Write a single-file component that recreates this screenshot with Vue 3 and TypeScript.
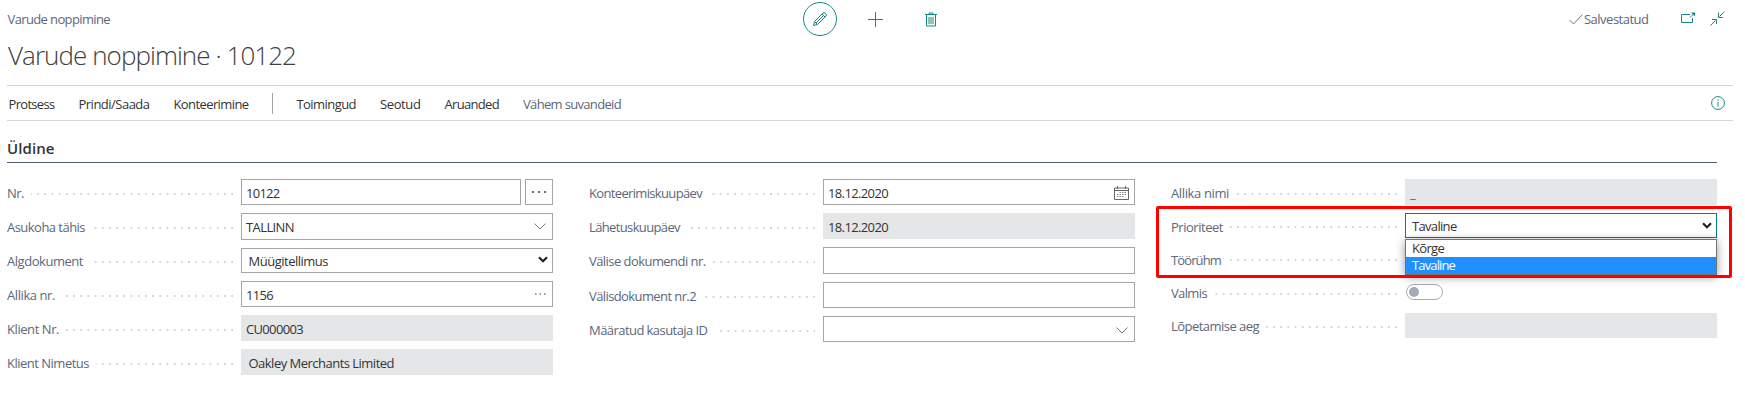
<script setup lang="ts">
interface Field {
  label: string
  labelWidth: number
  value?: string
  valueWidth?: number
  kind: 'text' | 'readonly' | 'lookup' | 'select' | 'assist' | 'edit' | 'date' | 'priority' | 'hidden' | 'toggle' | 'link'
  size?: 'short' | 'tall'
  inset?: boolean
}

interface MenuItem {
  text: string
  width: number
  muted?: boolean
}

const actions: MenuItem[] = [
  { text: 'Protsess', width: 46 },
  { text: 'Prindi/Saada', width: 71 },
  { text: 'Konteerimine', width: 75 },
]

const moreActions: MenuItem[] = [
  { text: 'Toimingud', width: 59.5 },
  { text: 'Seotud', width: 40.5 },
  { text: 'Aruanded', width: 54.5 },
  { text: 'Vähem suvandeid', width: 98, muted: true },
]

const columns: Field[][] = [
  [
    { label: 'Nr.', labelWidth: 17, value: '10122', valueWidth: 33.5, kind: 'edit' },
    { label: 'Asukoha tähis', labelWidth: 78, value: 'TALLINN', valueWidth: 48, kind: 'lookup', size: 'tall' },
    { label: 'Algdokument', labelWidth: 76, value: 'Müügitellimus', valueWidth: 79.5, kind: 'select', size: 'short', inset: true },
    { label: 'Allika nr.', labelWidth: 48, value: '1156', valueWidth: 27, kind: 'assist' },
    { label: 'Klient Nr.', labelWidth: 52, value: 'CU000003', valueWidth: 57, kind: 'readonly' },
    { label: 'Klient Nimetus', labelWidth: 82, value: 'Oakley Merchants Limited', valueWidth: 145.5, kind: 'readonly', inset: true },
  ],
  [
    { label: 'Konteerimiskuupäev', labelWidth: 113, value: '18.12.2020', valueWidth: 60, kind: 'date' },
    { label: 'Lähetuskuupäev', labelWidth: 91, value: '18.12.2020', valueWidth: 60, kind: 'readonly' },
    { label: 'Välise dokumendi nr.', labelWidth: 116.5, kind: 'text', size: 'tall' },
    { label: 'Välisdokument nr.2', labelWidth: 107, kind: 'text' },
    { label: 'Määratud kasutaja ID', labelWidth: 118.5, kind: 'lookup' },
  ],
  [
    { label: 'Allika nimi', labelWidth: 58, value: '_', valueWidth: 7, kind: 'link' },
    { label: 'Prioriteet', labelWidth: 52, value: 'Tavaline', valueWidth: 44.5, kind: 'priority', size: 'short', inset: true },
    { label: 'Töörühm', labelWidth: 50, kind: 'hidden', size: 'short' },
    { label: 'Valmis', labelWidth: 36, kind: 'toggle' },
    { label: 'Lõpetamise aeg', labelWidth: 88, kind: 'readonly', size: 'short' },
  ],
]

const vFit = {
  mounted(el: HTMLElement, binding: { value?: number }) {
    if (!binding.value) return
    const count = (el.textContent ?? '').length
    const natural = el.getBoundingClientRect().width
    if (count) el.style.letterSpacing = `${(binding.value - natural) / count}px`
  },
}
</script>

<template>
  <main class="page">
    <header class="top">
      <span class="crumb"><span v-fit="102.5">Varude noppimine</span></span>
      <div class="tools">
        <span class="ring">
          <svg width="16" height="16" viewBox="0 0 16 16">
            <path d="M1.5 14.5l1-4L11 2q1-.9 2-.1l1.1 1.2q.8 1-.1 1.9l-8.5 8.5zM2.5 10.5l3 3M10 3l3 3M4 12L11 5" />
          </svg>
        </span>
        <svg class="plus" width="15" height="15" viewBox="0 0 15 15"><path d="M7.5 0v15M0 7.5h15" /></svg>
        <svg width="12" height="15" viewBox="0 0 12 15">
          <path d="M0 2.5h12M4 2.5v-1.5h4v1.5M1.5 3v11h9V3M4 5v7M6 5v7M8 5v7" />
        </svg>
      </div>
      <div class="status">
        <svg class="check" width="14" height="11" viewBox="0 0 14 11"><path d="M.5 6l4 4L13.5.5" /></svg>
        <span class="saved"><span v-fit="64.5">Salvestatud</span></span>
        <svg class="popout" width="15" height="12" viewBox="0 0 15 12">
          <path d="M9 2.5H.5v8h11V6M9 5.500L12.500 2" />
          <path class="solid" d="M10 .5h4v4z" />
        </svg>
        <svg class="shrink" width="15" height="15" viewBox="0 0 15 15">
          <path d="M14.500 .5L9.500 5.500M8.500 1.500v5H13M.5 14.500L5.500 9.500M2 8.500h4.500V13" />
        </svg>
      </div>
    </header>

    <h1><span v-fit="288">Varude noppimine · 10122</span></h1>

    <nav class="menu">
      <span v-for="item in actions" :key="item.text" v-fit="item.width">{{ item.text }}</span>
      <i class="divider"></i>
      <span v-for="item in moreActions" :key="item.text" v-fit="item.width" :class="{ muted: item.muted }">{{ item.text }}</span>
      <svg class="info" width="14" height="14" viewBox="0 0 14 14">
        <circle cx="7" cy="7" r="6.4" /><path d="M7 6v4.5M7 3.3v1.4" />
      </svg>
    </nav>

    <h2><span v-fit="47.5">Üldine</span></h2>

    <section class="columns">
      <div v-for="(column, index) in columns" :key="index" class="column">
        <div v-for="field in column" :key="field.label" class="row" :class="[field.size, field.kind + '-row']">
          <label><span v-fit="field.labelWidth">{{ field.label }}</span></label>
          <span class="dots"></span>
          <div class="control" :class="[field.kind, { inset: field.inset }]">
            <div v-if="field.kind !== 'hidden' && field.kind !== 'toggle'" class="box">
              <span v-if="field.value" v-fit="field.valueWidth" class="value">{{ field.value }}</span>
              <svg v-if="field.kind === 'lookup'" class="end chevron" width="12" height="7" viewBox="0 0 12 7"><path d="M.5 .5L6 6 11.5.5" /></svg>
              <svg v-if="field.kind === 'select' || field.kind === 'priority'" class="end arrow" width="10" height="7" viewBox="0 0 10 7"><path d="M1 1.2l4 4 4-4" /></svg>
              <svg v-if="field.kind === 'assist'" class="end ellipsis" width="12" height="2" viewBox="0 0 12 2"><path d="M1 1h1.5M5.5 1H7M10 1h1.5" /></svg>
              <svg v-if="field.kind === 'date'" class="end calendar" width="15" height="14" viewBox="0 0 15 14">
                <path d="M.5 2v11.5h14V2zM.5 4.5h14M3.5 0v3M11.5 0v3" />
                <path class="days" d="M5.5 6.5h7M3 8.5h9.5M3 10.5h7" />
              </svg>
            </div>
            <span v-if="field.kind === 'edit'" class="button">
              <svg width="14" height="2" viewBox="0 0 14 2"><path d="M0 1h2M6 1h2M12 1h2" /></svg>
            </span>
            <ul v-if="field.kind === 'priority'" class="options">
              <li><span v-fit="32">Kõrge</span></li>
              <li class="active"><span v-fit="43">Tavaline</span></li>
            </ul>
            <span v-if="field.kind === 'toggle'" class="switch"><i></i></span>
          </div>
        </div>
      </div>
    </section>
    <div class="highlight"></div>
  </main>
</template>

<style>
body {
  margin: 0;
  background: #fff;
}
</style>

<style scoped>
* {
  box-sizing: border-box;
}

.page {
  position: relative;
  width: 1745px;
  height: 405px;
  overflow: hidden;
  padding-left: 7px;
  background: #fff;
  color: #333;
  font: 13px/18px "Open Sans", "Noto Sans", sans-serif;
  white-space: nowrap;
}

svg {
  display: block;
  flex: none;
  fill: none;
  stroke: #16888c;
  stroke-width: 1;
}

.top {
  display: grid;
  grid-template-columns: 796px 1fr auto;
  align-items: center;
  height: 38px;
  padding-right: 20px;
  color: #5c677b;
}

.crumb {
  padding-left: 0.5px;
}

.tools {
  display: flex;
  align-items: center;
}

.ring {
  display: grid;
  place-items: center;
  width: 34px;
  height: 34px;
  border: 1px solid #16888c;
  border-radius: 50%;
}

.plus {
  margin: 0 42px 0 31px;
}

.status {
  display: flex;
  align-items: center;
}

.check {
  stroke: #6f7785;
}

.saved {
  width: 98px;
  padding-left: 1px;
}

.popout {
  margin: 0 14px 3px 0;
}

.solid {
  fill: #16888c;
  stroke: none;
}

.shrink {
  margin-bottom: 2px;
}

h1 {
  height: 47px;
  margin: 0;
  padding-left: 1px;
  color: #404040;
  font-size: 26px;
  font-weight: 300;
  line-height: 35px;
}

.menu {
  display: flex;
  align-items: center;
  gap: 24px;
  width: 1726px;
  height: 36px;
  padding: 0 8px 0 1.5px;
  border-top: 1px solid #d3d5d8;
  border-bottom: 1px solid #d3d5d8;
}

.menu > span {
  padding-top: 2px;
}

.divider {
  width: 1px;
  height: 21px;
  margin: 0 -1px 0 0;
  transform: translateX(-1px);
  background: #a0a6b0;
}

.muted {
  color: #5c677b;
}

.info {
  margin-left: auto;
}

h2 {
  width: 1710px;
  height: 42px;
  margin: 0;
  padding-top: 17px;
  border-bottom: 1px solid #4f5e70;
  font-size: 15px;
  font-weight: 600;
  line-height: 20px;
}

.columns {
  display: grid;
  grid-template-columns: repeat(3, 546px);
  gap: 36px;
  padding-top: 16px;
}

.column {
  display: flex;
  flex-direction: column;
  gap: 8px;
}

.row {
  display: flex;
  align-items: center;
  height: 26px;
}

.row.short {
  height: 25px;
}

.row.tall {
  height: 27px;
}

label {
  padding-top: 2px;
  color: #5c677b;
}

.short label,
.tall label {
  padding-top: 0;
}

.priority-row label,
.hidden-row label {
  padding-top: 2px;
}

.dots {
  flex: 1;
  height: 2px;
  margin: 3px 8px 0 7px;
  background: linear-gradient(90deg, transparent 5.2px, #d2d5d9 5.2px) right top / 7.2px 2px repeat-x;
}

.control {
  position: relative;
  display: flex;
  gap: 4px;
  width: 312px;
  height: 100%;
}

.box {
  display: flex;
  flex: 1;
  align-items: center;
  padding: 2px 5px 0 4px;
  border: 1px solid #a6a6a6;
}

.tall .box,
.select .box {
  padding-top: 0;
}

.inset .box {
  padding-left: 6.5px;
}

.readonly .box,
.link .box {
  border-color: #e5e6e8;
  background: #e5e6e8;
}

.link .value {
  color: #00848a;
}

.priority .box {
  padding-top: 1px;
  padding-left: 6px;
  border-color: #008089;
}

.end {
  margin-left: auto;
  stroke: #777;
}

.chevron {
  margin-right: 1px;
}

.arrow {
  margin-right: -1px;
  margin-bottom: 2px;
  stroke: #222;
  stroke-width: 2.2;
}

.ellipsis {
  margin-right: 1px;
  margin-bottom: 3px;
  stroke-width: 1.5;
}

.calendar {
  margin-bottom: 1px;
  stroke: #666;
}

.days {
  stroke: #888;
  stroke-dasharray: 1.5 1;
}

.button {
  display: grid;
  place-items: center;
  width: 28px;
  border: 1px solid #a6a6a6;
}

.button svg {
  stroke: #444;
  stroke-width: 1.6;
}

.options {
  position: absolute;
  z-index: 2;
  top: 26px;
  left: 0;
  width: 312px;
  height: 36px;
  margin: 0;
  padding: 0;
  border: 1px solid #6f7377;
  background: #fff;
  box-shadow: 0 2px 9px rgba(0, 0, 0, 0.4);
  list-style: none;
}

.options li {
  height: 17px;
  padding-left: 6px;
  line-height: 17px;
}

.options .active {
  background: #1e90ff;
  color: #fff;
}

.switch {
  display: flex;
  align-items: center;
  width: 37px;
  height: 16px;
  margin: 5px 0 0 1px;
  padding-left: 2px;
  border: 1px solid #a5abb5;
  border-radius: 8px;
}

.switch i {
  width: 10px;
  height: 10px;
  border-radius: 50%;
  background: #a5abb5;
}

.highlight {
  position: absolute;
  z-index: 3;
  top: 206px;
  left: 1156px;
  width: 576px;
  height: 72px;
  border: 3px solid #f00;
  border-radius: 2px;
}
</style>
